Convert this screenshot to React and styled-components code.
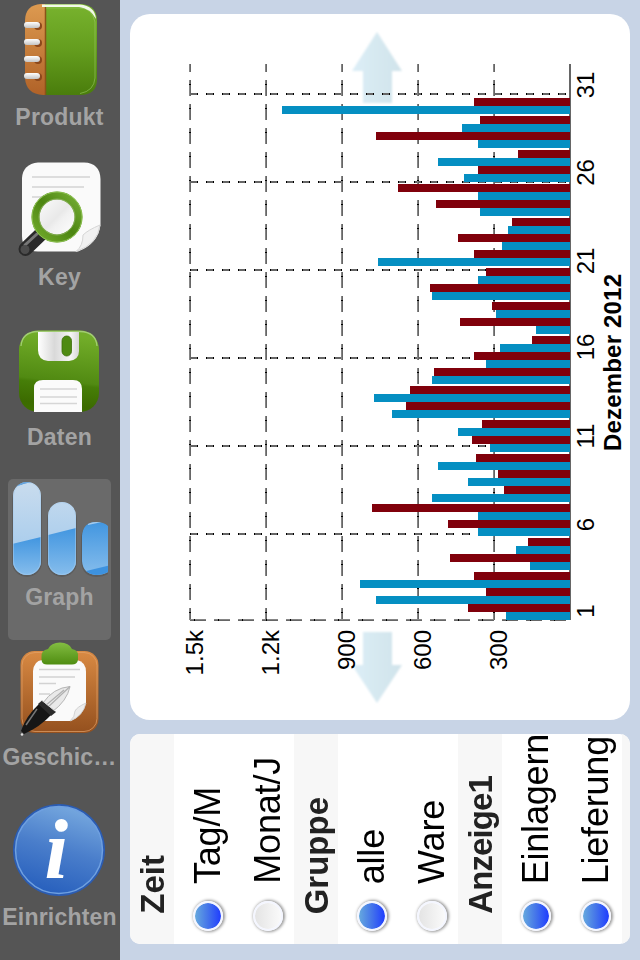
import React, { useState } from 'react';
import styled, { createGlobalStyle } from 'styled-components';

// every day: [top of the pair, Lieferung, Einlagern], lengths in px
const days = [
  [98, 96, 288], [116, 90, 108], [132, 194, 92], [150, 52, 132], [166, 92, 106],
  [184, 172, 92], [200, 134, 90], [218, 58, 62], [234, 112, 68], [250, 96, 192],
  [268, 84, 92], [284, 140, 138], [302, 78, 74], [318, 110, 34], [336, 38, 70],
  [352, 96, 84], [368, 136, 138], [386, 160, 196], [402, 164, 178], [420, 88, 112],
  [436, 98, 80], [454, 94, 132], [470, 72, 102], [486, 66, 138], [504, 198, 92],
  [520, 122, 92], [538, 42, 54], [554, 120, 40], [572, 96, 210], [588, 84, 194],
  [604, 102, 64],
];

const valueLabels = [
  { text: '1.5k', x: 203 },
  { text: '1.2k', x: 279 },
  { text: '900', x: 355 },
  { text: '600', x: 431 },
  { text: '300', x: 507 },
];

const dayLabels = [
  { text: '31', y: 85 },
  { text: '26', y: 172.5 },
  { text: '21', y: 261 },
  { text: '16', y: 347 },
  { text: '11', y: 436 },
  { text: '6', y: 524.5 },
  { text: '1', y: 611 },
];

const groups = [
  {
    title: 'Zeit',
    options: [
      { label: 'Tag/M', checked: true },
      { label: 'Monat/J', checked: false },
    ],
  },
  {
    title: 'Gruppe',
    options: [
      { label: 'alle', checked: true },
      { label: 'Ware', checked: false },
    ],
  },
  {
    title: 'Anzeige1',
    spacing: -0.9,
    options: [
      { label: 'Einlagern', checked: true },
      { label: 'Lieferung', checked: true },
    ],
  },
];

function NotebookIcon() {
  return (
    <TabIcon viewBox="0 0 120 100">
      <defs>
        <linearGradient id="cover" x1="0" y1="0" x2="0" y2="1">
          <stop offset="0" stopColor="#78b32e" />
          <stop offset="0.5" stopColor="#649d1e" />
          <stop offset="1" stopColor="#4a7d0c" />
        </linearGradient>
        <linearGradient id="spine" x1="0" y1="0" x2="0" y2="1">
          <stop offset="0" stopColor="#dd9a50" />
          <stop offset="1" stopColor="#b06228" />
        </linearGradient>
        <linearGradient id="ring" x1="0" y1="0" x2="0" y2="1">
          <stop offset="0" stopColor="#ffffff" />
          <stop offset="1" stopColor="#c4c4c4" />
        </linearGradient>
      </defs>
      <path d="M45 4H82Q97 6 97 21V79Q97 95 80 95H45Z" fill="url(#cover)" />
      <path d="M45 4H41Q25 5 25 21V78Q26 94 43 95H45Z" fill="url(#spine)" />
      <path d="M45.5 5V95" stroke="#8a5318" strokeWidth="1.5" />
      <path d="M46 8H80Q92 8 95 22V78Q94 91 80 93.500" fill="none" stroke="#9acb63" strokeWidth="1" opacity="0.6" />
      <path d="M42 4.5H80Q95 6 96 19Q90 8 79 7H42Z" fill="#f2f9e8" />
      {[25, 42, 59, 76].map((y) => (
        <g key={y}>
          <circle cx="38" cy={y + 1} r="4" fill="#8c481b" />
          <rect x="24" y={y - 3} width="16" height="6" rx="3" fill="url(#ring)" />
        </g>
      ))}
    </TabIcon>
  );
}

function SearchIcon() {
  return (
    <TabIcon viewBox="0 0 120 100">
      <defs>
        <linearGradient id="lensRing" x1="1" y1="0" x2="0" y2="1">
          <stop offset="0" stopColor="#75ae35" />
          <stop offset="0.5" stopColor="#4c8511" />
          <stop offset="1" stopColor="#73ab2c" />
        </linearGradient>
        <linearGradient id="lens" x1="0" y1="0" x2="1" y2="1">
          <stop offset="0" stopColor="#fbfbfb" />
          <stop offset="0.5" stopColor="#e9e9e9" />
          <stop offset="0.6" stopColor="#f1f1f1" />
          <stop offset="1" stopColor="#ffffff" />
        </linearGradient>
      </defs>
      <path d="M38 2.5H84Q100 3 100.500 19V65Q98 84 78 91.500H38Q22 91 22 76V18Q23 4 38 2.500Z" fill="#fafafa" />
      <path d="M32 17H90M32 27H84M32 37H50" stroke="#d3d3d3" strokeWidth="1.6" />
      <path d="M100 65Q88 70 83 75Q83 86 76 91.500Q98 84 100 65Z" fill="#f1f1f1" stroke="#d6d6d6" strokeWidth="1" />
      <path d="M40 75L25.500 89" stroke="#2a2a2a" strokeWidth="14" strokeLinecap="round" />
      <path d="M37 74L25 85" stroke="#777" strokeWidth="3" strokeLinecap="round" />
      <circle cx="25" cy="89.500" r="4.500" fill="#4c4c4c" />
      <circle cx="57" cy="57" r="19" fill="url(#lens)" />
      <circle cx="57" cy="57" r="21.500" fill="none" stroke="url(#lensRing)" strokeWidth="8" />
      <circle cx="57" cy="57" r="25" fill="none" stroke="#8dc153" strokeWidth="1" />
      <circle cx="57" cy="57" r="18" fill="none" stroke="#8fb465" strokeWidth="0.8" />
    </TabIcon>
  );
}

function DiskIcon() {
  return (
    <TabIcon viewBox="0 0 120 100">
      <defs>
        <linearGradient id="disk" x1="0" y1="0" x2="-0.1" y2="1">
          <stop offset="0" stopColor="#72ad29" />
          <stop offset="0.56" stopColor="#518a12" />
          <stop offset="0.6" stopColor="#467e08" />
          <stop offset="0.85" stopColor="#3c6b00" />
          <stop offset="1" stopColor="#3e7100" />
        </linearGradient>
        <linearGradient id="shutter" x1="0" y1="0" x2="1" y2="0">
          <stop offset="0" stopColor="#ffffff" />
          <stop offset="0.4" stopColor="#d9d9d9" />
          <stop offset="0.8" stopColor="#f5f5f5" />
          <stop offset="1" stopColor="#d6d6d6" />
        </linearGradient>
      </defs>
      <rect x="19" y="10.500" width="80" height="81.500" rx="19" fill="url(#disk)" />
      <path d="M21 26Q22 12 38 11.500H80Q96 12 97 26" fill="none" stroke="#a1cc72" strokeWidth="1.3" />
      <path d="M38 12H79V31Q79 40 69 41H48Q38 40 38 30Z" fill="url(#shutter)" />
      <rect x="62" y="16" width="9.500" height="20" rx="4.700" fill="#4e8a12" stroke="#3c6d0b" strokeWidth="0.8" />
      <path d="M34 92V68Q34 60 43 60H73Q82 60 82 69V92Z" fill="#fbfbfb" />
      <path d="M40 69H77M40 77H77M40 83.500H77" stroke="#d6d6d6" strokeWidth="1.600" />
    </TabIcon>
  );
}

function GraphIcon() {
  return (
    <TabIcon viewBox="0 0 120 100">
      <defs>
        <linearGradient id="pale" x1="0" y1="0" x2="0" y2="1">
          <stop offset="0" stopColor="#c9dcee" />
          <stop offset="1" stopColor="#9dc7ec" />
        </linearGradient>
        <linearGradient id="strong" x1="0" y1="0" x2="0" y2="1">
          <stop offset="0" stopColor="#4296e0" />
          <stop offset="1" stopColor="#86bdec" />
        </linearGradient>
        <clipPath id="pills">
          <rect x="13" y="2" width="28" height="93" rx="14" />
          <rect x="48" y="22" width="28" height="73" rx="14" />
          <path d="M82 56Q83 42 96 42Q104 42 108 46V92Q103 95 96 95Q83 94 82 81Z" />
        </clipPath>
      </defs>
      <g fill="#444" opacity="0.35">
        <rect x="12" y="4" width="30" height="93" rx="15" />
        <rect x="47" y="24" width="30" height="73" rx="15" />
        <path d="M81 57Q83 43 96 43Q104 43 108 47V94Q103 97 96 97Q82 96 81 82Z" />
      </g>
      <g clipPath="url(#pills)">
        <rect x="12" y="2" width="66" height="93" fill="url(#pale)" />
        <path d="M16 2H33Q24 3 13 8Z" fill="#3889d4" />
        <path d="M12 64L41 57V95H12Z" fill="url(#strong)" />
        <path d="M48 55L76 48V95H48Z" fill="url(#strong)" />
        <rect x="82" y="42" width="27" height="53" fill="url(#strong)" />
        <path d="M88 45L102 42H88Z" fill="#a5cbed" />
        <path d="M82 92L109 85.500V96H82Z" fill="#3d92df" />
      </g>
      <g fill="none" stroke="#a7cdef" strokeWidth="1" opacity="0.5">
        <rect x="13.500" y="2.500" width="27" height="92" rx="13.500" />
        <rect x="48.500" y="22.500" width="27" height="72" rx="13.500" />
      </g>
    </TabIcon>
  );
}

function ClipboardIcon() {
  return (
    <TabIcon viewBox="0 0 120 100">
      <defs>
        <linearGradient id="board" x1="0" y1="0" x2="0" y2="1">
          <stop offset="0" stopColor="#d98a43" />
          <stop offset="1" stopColor="#94501e" />
        </linearGradient>
        <linearGradient id="clip" x1="0" y1="0" x2="0" y2="1">
          <stop offset="0" stopColor="#83bd42" />
          <stop offset="1" stopColor="#4f8d11" />
        </linearGradient>
      </defs>
      <rect x="20.500" y="11" width="78" height="82" rx="14" fill="url(#board)" />
      <rect x="22" y="12.500" width="75" height="79" rx="13" fill="none" stroke="#e3a369" strokeWidth="1" opacity="0.7" />
      <path d="M42 20H77Q86 22 86 32V63Q83 76 71 81H42Q33 80 33 71V31Q34 21 42 20Z" fill="#fafafa" />
      <path d="M39 29.500H80M39 37H75M39 43.500H56M39 54H50" stroke="#d2d2d2" strokeWidth="1.600" />
      <path d="M86 63Q77 67 75 71Q75 77 70 81Q83 76 86 63Z" fill="#ececec" stroke="#c9c9c9" strokeWidth="0.800" />
      <path d="M41.500 17Q41 10 48 9Q51 2.500 60 2.500Q69 2.500 72 9Q79 10 78 17V20Q77 24.500 72 24.500H47Q42 24.500 41.500 20Z" fill="url(#clip)" />
      <path d="M43 63Q53 48 70 46.500Q67 61 52 72Z" fill="#e9e9e9" stroke="#b5b5b5" strokeWidth="1" />
      <path d="M70 46.500L47 68M64 50L45 66" stroke="#b0b0b0" strokeWidth="1.200" />
      <path d="M39 64L52 74Q40 87 24 94L21 91Q26 76 39 64Z" fill="#161616" />
      <path d="M37 69L26 85" stroke="#777" strokeWidth="1.500" />
      <path d="M38 64L42 60.500L56 72L51 76Z" fill="#2b2b2b" />
      <path d="M42 60.500L55 71" stroke="#d8d8d8" strokeWidth="1" />
      <circle cx="22" cy="94.500" r="1.300" fill="#ddd" />
    </TabIcon>
  );
}

function InfoIcon() {
  return (
    <TabIcon viewBox="0 0 120 100">
      <defs>
        <linearGradient id="info" x1="0.700" y1="0" x2="0.400" y2="1">
          <stop offset="0" stopColor="#77a9df" />
          <stop offset="0.5" stopColor="#4a7ecb" />
          <stop offset="1" stopColor="#2860bd" />
        </linearGradient>
      </defs>
      <circle cx="59" cy="50" r="46" fill="#2b5cb2" />
      <circle cx="59" cy="50" r="43.500" fill="url(#info)" stroke="#6fa0e0" strokeWidth="1.500" />
      <InfoLetter x="44.500" y="77.500">i</InfoLetter>
    </TabIcon>
  );
}

const tabs = [
  { label: 'Produkt', icon: NotebookIcon },
  { label: 'Key', icon: SearchIcon },
  { label: 'Daten', icon: DiskIcon },
  { label: 'Graph', icon: GraphIcon },
  { label: 'Geschic…', icon: ClipboardIcon },
  { label: 'Einrichten', icon: InfoIcon },
];

function Chart() {
  return (
    // the drawing keeps page coordinates, so the view box starts at the card's corner
    <ChartSvg viewBox="130 14 500 706">
      <defs>
        <linearGradient id="arrow" x1="0" y1="0" x2="1" y2="0">
          <stop offset="0" stopColor="#dceef7" />
          <stop offset="1" stopColor="#d0e3ea" />
        </linearGradient>
        <filter id="soft">
          <feGaussianBlur stdDeviation="0.9" />
        </filter>
      </defs>
      <g fill="url(#arrow)" filter="url(#soft)">
        <path d="M377 32L402 71H392V103H363V71H352Z" />
        <path d="M377 703L402 665H392V632H363V665H352Z" />
      </g>
      {[94, 182, 270, 358, 446, 534].map((y) => (
        <g key={y}>
          <path d={`M190 ${y}H570`} stroke="#000" strokeWidth="2" strokeDasharray="8 8" />
          <path d={`M191 ${y}H570`} stroke="#666" strokeWidth="2" strokeDasharray="6 10" />
        </g>
      ))}
      {[190, 266, 342, 418, 494].map((x) => (
        <g key={x}>
          <path d={`M${x - 0.5} 64V620`} stroke="#858585" strokeDasharray="16 8" strokeDashoffset="8" />
          <path d={`M${x + 0.5} 64V620`} stroke="#666" strokeDasharray="16 8" strokeDashoffset="8" />
          <path d={`M${x} 84V620`} stroke="#000" strokeWidth="2" strokeDasharray="1 23" />
        </g>
      ))}
      <path d="M190 619.500H570" stroke="#858585" strokeDasharray="16 8" />
      <path d="M190 620.500H570" stroke="#666" strokeDasharray="16 8" />
      <path d="M194 620H570" stroke="#000" strokeWidth="2" strokeDasharray="1 23" />
      <path d="M570 64V620" stroke="#666" strokeWidth="2" />
      {days.map(([y, red, blue]) => (
        <g key={y}>
          <rect x={570 - red} y={y} width={red} height="8" fill="#80000b" />
          <rect x={570 - blue} y={y + 8} width={blue} height="8" fill="#058fc2" />
        </g>
      ))}
      {valueLabels.map(({ text, x }) => (
        <AxisText key={text} transform={`translate(${x} 630) rotate(-90)`} textAnchor="end">{text}</AxisText>
      ))}
      {dayLabels.map(({ text, y }) => (
        <AxisText key={text} transform={`translate(593.5 ${y}) rotate(-90)`} textAnchor="middle">{text}</AxisText>
      ))}
      <AxisTitle transform="translate(621 451) rotate(-90)" textLength="177">Dezember 2012</AxisTitle>
    </ChartSvg>
  );
}

function App() {
  const [active, setActive] = useState('Graph');

  return (
    <Screen>
      <GlobalStyle />
      <TabBar>
        {tabs.map(({ label, icon: Icon }) => (
          <Tab key={label} $active={label === active} onClick={() => { setActive(label) }}>
            <Icon />
            <TabLabel>{label}</TabLabel>
          </Tab>
        ))}
      </TabBar>
      <Main>
        <ChartCard>
          <Chart />
        </ChartCard>
        <Settings>
          {groups.map((group) => (
            <React.Fragment key={group.title}>
              <GroupHeader>
                <GroupTitle $spacing={group.spacing}>{group.title}</GroupTitle>
              </GroupHeader>
              {group.options.map((option) => (
                <Option key={option.label}>
                  <Radio $checked={option.checked} />
                  <OptionLabel>{option.label}</OptionLabel>
                </Option>
              ))}
            </React.Fragment>
          ))}
          <GroupHeader />
        </Settings>
      </Main>
    </Screen>
  );
}

export default App;

const GlobalStyle = createGlobalStyle`
  body {
    margin: 0;
    font-family: "Liberation Sans", Arial, sans-serif;
  }
`
const Screen = styled.div`
  display: flex;
  width: 640px;
  height: 960px;
  overflow: hidden;
  background: #c8d4e6;
`
const TabBar = styled.nav`
  display: flex;
  flex-direction: column;
  flex: none;
  width: 120px;
  background: #555;
`
const Tab = styled.div`
  display: flex;
  flex-direction: column;
  align-items: center;
  flex: none;
  box-sizing: border-box;
  width: 103px;
  height: ${props => props.$active ? '161px' : '160px'};
  margin: ${props => props.$active ? '-1px 9px 0 8px' : '0 9px 0 8px'};
  padding-top: ${props => props.$active ? '1px' : '0'};
  border-radius: 5px;
  background: ${props => props.$active ? '#6a6a6a' : 'transparent'};
  cursor: pointer;
`
const TabIcon = styled.svg`
  display: block;
  flex: none;
  width: 120px;
  height: 100px;
  margin-left: 1px;
`
const TabLabel = styled.span`
  margin-top: 4px;
  color: #a3a3a3;
  font-size: 23px;
  font-weight: bold;
  line-height: 26px;
  letter-spacing: 0.2px;
  white-space: nowrap;
`
const InfoLetter = styled.text`
  fill: #fff;
  font-family: "Liberation Serif", serif;
  font-size: 85px;
  font-style: italic;
  font-weight: bold;
`
const Main = styled.main`
  display: flex;
  flex-direction: column;
  gap: 14px;
  flex: 1;
  min-width: 0;
  padding: 14px 10px 16px;
`
const ChartCard = styled.section`
  height: 706px;
  border-radius: 20px;
  background: #fff;
`
const ChartSvg = styled.svg`
  display: block;
  width: 500px;
  height: 706px;
`
const AxisText = styled.text`
  font-size: 24px;
`
const AxisTitle = styled.text`
  font-size: 24px;
  font-weight: bold;
`
const Settings = styled.section`
  display: flex;
  height: 210px;
  border-radius: 10px;
  background: #fff;
  overflow: hidden;
`
const GroupHeader = styled.div`
  display: flex;
  flex-direction: column-reverse;
  align-items: center;
  flex: none;
  box-sizing: border-box;
  width: 44px;
  padding: 0 0 30px 2px;
  background: #f7f7f7;
`
// text that reads from the bottom to the top
const Sideways = styled.span`
  flex: none;
  writing-mode: vertical-rl;
  transform: rotate(180deg);
  white-space: nowrap;
`
const GroupTitle = styled(Sideways)`
  color: #222;
  font-size: 33px;
  font-weight: bold;
  line-height: 38px;
  letter-spacing: ${props => props.$spacing || 0}px;
`
const Option = styled.div`
  display: flex;
  flex-direction: column-reverse;
  align-items: center;
  gap: 17px;
  flex: none;
  box-sizing: border-box;
  width: 60px;
  padding: 0 0 13px 8px;
`
const OptionLabel = styled(Sideways)`
  color: #000;
  font-size: 36px;
  line-height: 42px;
  letter-spacing: -0.2px;
`
const Radio = styled.span`
  flex: none;
  box-sizing: border-box;
  width: 30px;
  height: 30px;
  border: 2px solid #f4f6ff;
  border-radius: 50%;
  background: ${props => props.$checked
    ? 'linear-gradient(90deg, #66a9de, #4474ea 50%, #1f3dff)'
    : 'linear-gradient(90deg, #e4e4e4, #fafafa)'};
  background-clip: padding-box;
  box-shadow: 1px 0 3px 1px rgba(0, 0, 0, 0.4);
`
